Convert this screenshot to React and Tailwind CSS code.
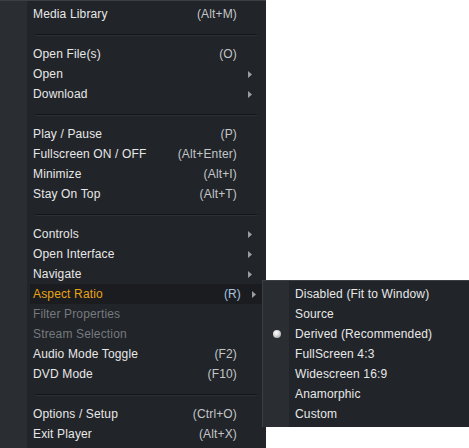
import React from 'react';

const mainItems = [
    { label: 'Media Library', key: '(Alt+M)' },
    { sep: true },
    { label: 'Open File(s)', key: '(O)' },
    { label: 'Open', sub: true },
    { label: 'Download', sub: true },
    { sep: true },
    { label: 'Play / Pause', key: '(P)' },
    { label: 'Fullscreen ON / OFF', key: '(Alt+Enter)' },
    { label: 'Minimize', key: '(Alt+I)' },
    { label: 'Stay On Top', key: '(Alt+T)' },
    { sep: true },
    { label: 'Controls', sub: true },
    { label: 'Open Interface', sub: true },
    { label: 'Navigate', sub: true },
    { label: 'Aspect Ratio', key: '(R)', sub: true, active: true },
    { label: 'Filter Properties', disabled: true },
    { label: 'Stream Selection', disabled: true },
    { label: 'Audio Mode Toggle', key: '(F2)' },
    { label: 'DVD Mode', key: '(F10)' },
    { sep: true },
    { label: 'Options / Setup', key: '(Ctrl+O)' },
    { label: 'Exit Player', key: '(Alt+X)' },
];

const aspectItems = [
    'Disabled (Fit to Window)',
    'Source',
    'Derived (Recommended)',
    'FullScreen 4:3',
    'Widescreen 16:9',
    'Anamorphic',
    'Custom',
];

const Arrow = () => (
    <svg width="4" height="7" viewBox="0 0 4 7" className="block">
        <path d="M0 0 L4 3.5 L0 7 Z" fill="#9a9da0" />
    </svg>
);

const MenuRow = ({ item }) => {
    if (item.sep) {
        return (
            <div className="h-5 flex items-center pl-[35px] pr-[9px]">
                <div className="w-full h-px bg-[#141618] shadow-[0_1px_0_#2c2f33]" />
            </div>
        );
    }
    const textColor = item.disabled ? 'text-[#767a7e]' : item.active ? 'text-[#e8a317]' : 'text-[#e8e8e8]';
    return (
        <div className={`h-5 flex items-center ml-[30px] pl-[3px] pr-[14px] ${item.active ? 'bg-[#1a1c1f] mr-[-4px]' : ''}`}>
            <span className={`flex-1 ${textColor}`}>{item.label}</span>
            {item.key && <span className={`${item.active ? 'text-[#a9c4e0]' : 'text-[#c4c6c8]'}`}>{item.key}</span>}
            <span className="w-[15px] flex justify-end">{item.sub && <Arrow />}</span>
        </div>
    );
};

export default function App() {
    return (
        <div className="relative w-[469px] h-[448px] bg-white text-[12px] leading-5 tracking-[0.15px] font-['Liberation_Sans',Arial,sans-serif] overflow-hidden">
            <div className="relative w-[266px] h-[448px] bg-[#212428] border-t border-[#3b3e42] py-[3px] bg-[linear-gradient(to_right,#2a2d31_0,#2a2d31_27px,#212428_27px)]">
                {mainItems.map((item, i) => (
                    <MenuRow key={i} item={item} />
                ))}
            </div>
            <div className="absolute left-[262px] top-[280px] w-[210px] h-[147px] border-t border-l border-[#3b3e42] pt-[3px] bg-[linear-gradient(to_right,#2a2d31_0,#2a2d31_26px,#212428_26px)]">
                {aspectItems.map((label, i) => (
                    <div key={label} className="h-5 flex items-center">
                        <div className="w-[28px] flex justify-center items-center">
                            {i === 2 && (
                                <span className="block w-[8px] h-[8px] rounded-full bg-[radial-gradient(circle_at_40%_35%,#ffffff_0,#d8d8d8_45%,#8a8a8a_100%)]" />
                            )}
                        </div>
                        <span className="ml-[4px] text-[#e8e8e8]">{label}</span>
                    </div>
                ))}
            </div>
        </div>
    );
}
